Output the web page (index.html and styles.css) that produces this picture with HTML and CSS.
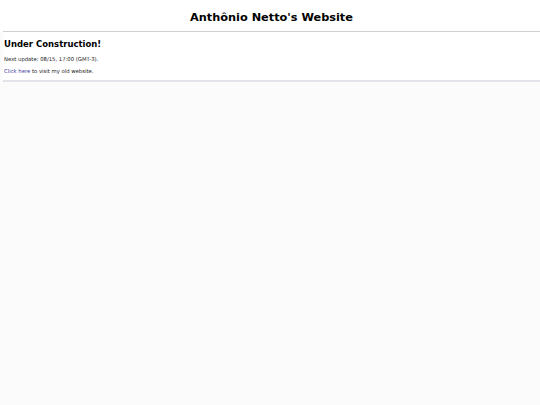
FILE: index.html
```html
<!DOCTYPE html>
<html>
<head>
<meta charset="utf-8">
<link rel="stylesheet" href="styles.css">
</head>
<body>
<header class="site-header">
  <h1 class="site-title">Anthônio Netto's Website</h1>
</header>
<main class="content">
  <h2 class="notice-title">Under Construction!</h2>
  <p class="small">Next update: 08/15, 17:00 (GMT-3).</p>
  <p class="small"><a class="link" href="#">Click here</a> to visit my old website.</p>
</main>
<div class="rest"></div>
</body>
</html>
```
FILE: styles.css
```css
html, body {
  margin: 0;
  padding: 0;
  background: #fcfbfc;
  font-family: "DejaVu Sans", sans-serif;
  color: #000;
}
.site-header {
  background: #fff;
  padding: 11px 0 0 0;
}
.site-title {
  margin: 0 0 0 3px;
  padding-bottom: 7px;
  text-align: center;
  font-size: 11.3px;
  line-height: 13px;
  font-weight: bold;
  border-bottom: 1px solid #cfcfd2;
}
.content {
  background: #fff;
  margin-left: 3px;
  padding: 7px 0 5px 1px;
  border-bottom: 2px solid #e4e2e8;
}
.notice-title {
  margin: 0 0 6px 0;
  font-size: 8.5px;
  line-height: 11px;
  font-weight: bold;
}
.small {
  margin: 0 0 5px 0;
  font-size: 5.3px;
  line-height: 7px;
  color: #222;
}
.small:last-child {
  margin-bottom: 0;
}
.link {
  color: #3b3b9c;
  text-decoration: none;
}
```
